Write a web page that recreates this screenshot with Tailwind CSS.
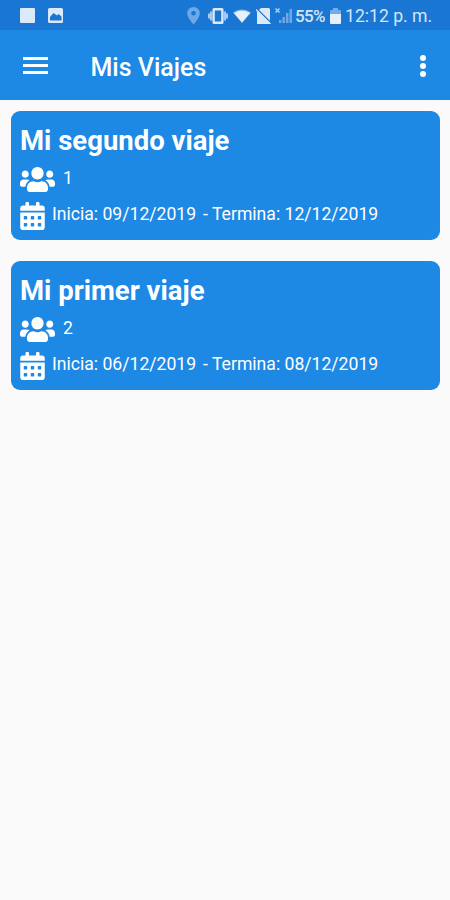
<!DOCTYPE html>
<html lang="es">
<head>
    <meta charset="UTF-8">
    <meta name="viewport" content="width=device-width, initial-scale=1.0">
    <title>Mis Viajes</title>
    <script src="https://cdn.jsdelivr.net/npm/@tailwindcss/browser@4"></script>
</head>
<body class="h-[900px] overflow-hidden bg-[#fafafa] font-[Roboto,sans-serif] text-white">
    <!-- Shared icons -->
    <svg class="hidden">
        <symbol id="users" viewBox="0 0 640 448" preserveAspectRatio="none">
            <path transform="translate(0 -32)" d="M96 224c35.300 0 64-28.700 64-64s-28.700-64-64-64-64 28.700-64 64 28.700 64 64 64zm448 0c35.300 0 64-28.700 64-64s-28.700-64-64-64-64 28.700-64 64 28.700 64 64 64zm32 32h-64c-17.600 0-33.500 7.100-45.100 18.600 40.300 22.100 68.900 62 75.100 109.400h66c17.700 0 32-14.300 32-32v-32c0-35.300-28.700-64-64-64zm-256 0c61.900 0 112-50.100 112-112S381.900 32 320 32 208 82.100 208 144s50.100 112 112 112zm76.800 32h-8.300c-20.800 10-43.900 16-68.500 16s-47.600-6-68.500-16h-8.300C179.600 288 128 339.600 128 403.200V432c0 26.500 21.500 48 48 48h288c26.500 0 48-21.500 48-48v-28.800c0-63.600-51.600-115.200-115.200-115.200zm-223.700-13.400C161.500 263.100 145.600 256 128 256H64c-35.300 0-64 28.700-64 64v32c0 17.700 14.300 32 32 32h65.900c6.300-47.400 34.900-87.300 75.200-109.400z"/>
        </symbol>
        <symbol id="calendar" viewBox="0 0 448 512">
            <path d="M0 464c0 26.500 21.500 48 48 48h352c26.500 0 48-21.500 48-48V192H0v272zm320-196c0-6.600 5.400-12 12-12h40c6.600 0 12 5.400 12 12v40c0 6.600-5.400 12-12 12h-40c-6.600 0-12-5.400-12-12v-40zm0 128c0-6.600 5.400-12 12-12h40c6.600 0 12 5.400 12 12v40c0 6.600-5.400 12-12 12h-40c-6.600 0-12-5.400-12-12v-40zM192 268c0-6.600 5.400-12 12-12h40c6.600 0 12 5.400 12 12v40c0 6.600-5.400 12-12 12h-40c-6.600 0-12-5.400-12-12v-40zm0 128c0-6.600 5.400-12 12-12h40c6.600 0 12 5.400 12 12v40c0 6.600-5.400 12-12 12h-40c-6.600 0-12-5.400-12-12v-40zM64 268c0-6.600 5.400-12 12-12h40c6.600 0 12 5.400 12 12v40c0 6.600-5.400 12-12 12H76c-6.600 0-12-5.400-12-12v-40zm0 128c0-6.600 5.400-12 12-12h40c6.600 0 12 5.400 12 12v40c0 6.600-5.400 12-12 12H76c-6.600 0-12-5.400-12-12v-40zM400 64h-48V16c0-8.800-7.200-16-16-16h-32c-8.800 0-16 7.200-16 16v48H160V16c0-8.800-7.200-16-16-16h-32c-8.800 0-16 7.200-16 16v48H48C21.500 64 0 85.500 0 112v48h448v-48c0-26.500-21.500-48-48-48z"/>
        </symbol>
    </svg>

    <!-- Status bar -->
    <div class="flex h-[30px] items-center bg-[#1976d2] pt-px pl-5 text-[#d5e5f7]">
        <div class="size-[15px] rounded-[1px] bg-[#dce9f8]"></div>
        <svg class="ml-[13px] size-[15px]" viewBox="0 0 15 15" fill="#dce9f8">
            <path fill-rule="evenodd" d="M1.500 0h12a1.500 1.500 0 0 1 1.500 1.500v12a1.500 1.500 0 0 1-1.500 1.500h-12A1.500 1.500 0 0 1 0 13.500v-12A1.500 1.500 0 0 1 1.500 0zM2 12.500h11.500V8.500L10.500 6 9 7.500 5.500 5 2 9z"/>
        </svg>
        <svg class="ml-[124px] h-[18px] w-[13px]" viewBox="0 0 13 18" fill="#6da9e5">
            <path fill-rule="evenodd" d="M6.500 0A6.300 6.300 0 0 0 .2 6.300C.2 11 6.500 17.500 6.500 17.500S12.800 11 12.800 6.300A6.300 6.300 0 0 0 6.500 0zm0 4a2.300 2.300 0 1 1 0 4.600 2.300 2.300 0 0 1 0-4.600z"/>
        </svg>
        <svg class="ml-2 h-4 w-5" viewBox="0 0 20 16" fill="#dce9f8">
            <path fill-rule="evenodd" d="M6 0h8a1.500 1.500 0 0 1 1.500 1.500v13A1.500 1.500 0 0 1 14 16H6a1.500 1.500 0 0 1-1.500-1.500v-13A1.500 1.500 0 0 1 6 0zm.8 2.500v11h6.400v-11z"/>
            <path d="M2 3.500h2.500v9H2zM0 5.500h2v5H0zM15.500 3.500H18v9h-2.500zM18 5.500h2v5h-2z" fill="#a5c9f0"/>
        </svg>
        <svg class="ml-[5px] h-[14px] w-[18px]" viewBox="0 0 18 14">
            <path d="M0 3.500Q9-2.500 18 3.500L9 14z" fill="#8dbbec"/>
            <path d="M1 4Q9-.500 17 4L9 13.500z" fill="#e6f0fb"/>
        </svg>
        <svg class="ml-[5px] h-4 w-[15px]" viewBox="0 0 15 16">
            <path d="M5 0h7.500A1.500 1.500 0 0 1 14 1.500V16H1V4z" fill="#dce9f8"/>
            <path d="M1 1L15 15" stroke="#1976d2" stroke-width="1.600"/>
            <path d="M0 1.500L14.500 16" stroke="#dce9f8" stroke-width="1.300"/>
        </svg>
        <svg class="ml-1 h-[15px] w-[17px]" viewBox="0 0 17 15">
            <path d="M4 15v-3h2.500v3zM7.500 15V9H10v6zM11 15V5h2.500v10zM14.500 15V1H17v14z" fill="#6da9e5"/>
            <path d="M.5.500l4 4m0-4l-4 4" stroke="#b9d5f3" stroke-width="1.300"/>
        </svg>
        <span class="mt-px ml-[3px] w-[30px] text-[17px] leading-none font-medium tracking-[-0.7px] whitespace-nowrap">55%</span>
        <svg class="ml-[5px] h-4 w-[11px]" viewBox="0 0 11 16">
            <path d="M3 0h5v2h2a1 1 0 0 1 1 1v3H0V3a1 1 0 0 1 1-1h2z" fill="#75ade7"/>
            <path d="M0 6h11v9a1 1 0 0 1-1 1H1a1 1 0 0 1-1-1z" fill="#e6f0fb"/>
        </svg>
        <span class="mt-[2px] ml-1 text-[17.6px] leading-none whitespace-nowrap">12:12 p. m.</span>
    </div>

    <!-- App bar -->
    <header class="flex h-[70px] items-center bg-[#1e88e5] pr-6 pl-[23px]">
        <div class="flex w-[25px] flex-col gap-[4px]">
            <div class="h-[3px] bg-white"></div>
            <div class="h-[3px] bg-white"></div>
            <div class="h-[3px] bg-white"></div>
        </div>
        <h1 class="mt-[4px] ml-[42.5px] text-[25px] leading-none font-medium">Mis Viajes</h1>
        <div class="mt-px ml-auto flex flex-col gap-[2px]">
            <div class="size-[6px] rounded-full bg-white"></div>
            <div class="size-[6px] rounded-full bg-white"></div>
            <div class="size-[6px] rounded-full bg-white"></div>
        </div>
    </header>

    <!-- Trip list -->
    <main class="flex flex-col gap-[21px] pt-[11px] pr-[10px] pl-[11px]">
        <article class="h-[129px] rounded-[9px] bg-[#1e88e5] pt-[14px] pl-[9px]">
            <h2 class="text-[27.5px] leading-8 font-bold">Mi segundo viaje</h2>
            <div class="mt-[10px] flex h-[25px] items-center gap-2">
                <svg class="h-[25px] w-[35px] fill-white"><use href="#users"/></svg>
                <span class="-mt-[3px] text-[17.6px] leading-5">1</span>
            </div>
            <div class="mt-[10px] flex h-7 items-center">
                <svg class="h-7 w-[25px] fill-white"><use href="#calendar"/></svg>
                <span class="-mt-1 ml-[7px] text-[17.6px] leading-5">Inicia: 09/12/2019</span>
                <span class="-mt-1 ml-[7px] text-[17.6px] leading-5">- Termina: 12/12/2019</span>
            </div>
        </article>
        <article class="h-[129px] rounded-[9px] bg-[#1e88e5] pt-[14px] pl-[9px]">
            <h2 class="text-[27.5px] leading-8 font-bold">Mi primer viaje</h2>
            <div class="mt-[10px] flex h-[25px] items-center gap-2">
                <svg class="h-[25px] w-[35px] fill-white"><use href="#users"/></svg>
                <span class="-mt-[3px] text-[17.6px] leading-5">2</span>
            </div>
            <div class="mt-[10px] flex h-7 items-center">
                <svg class="h-7 w-[25px] fill-white"><use href="#calendar"/></svg>
                <span class="-mt-1 ml-[7px] text-[17.6px] leading-5">Inicia: 06/12/2019</span>
                <span class="-mt-1 ml-[7px] text-[17.6px] leading-5">- Termina: 08/12/2019</span>
            </div>
        </article>
    </main>
</body>
</html>
